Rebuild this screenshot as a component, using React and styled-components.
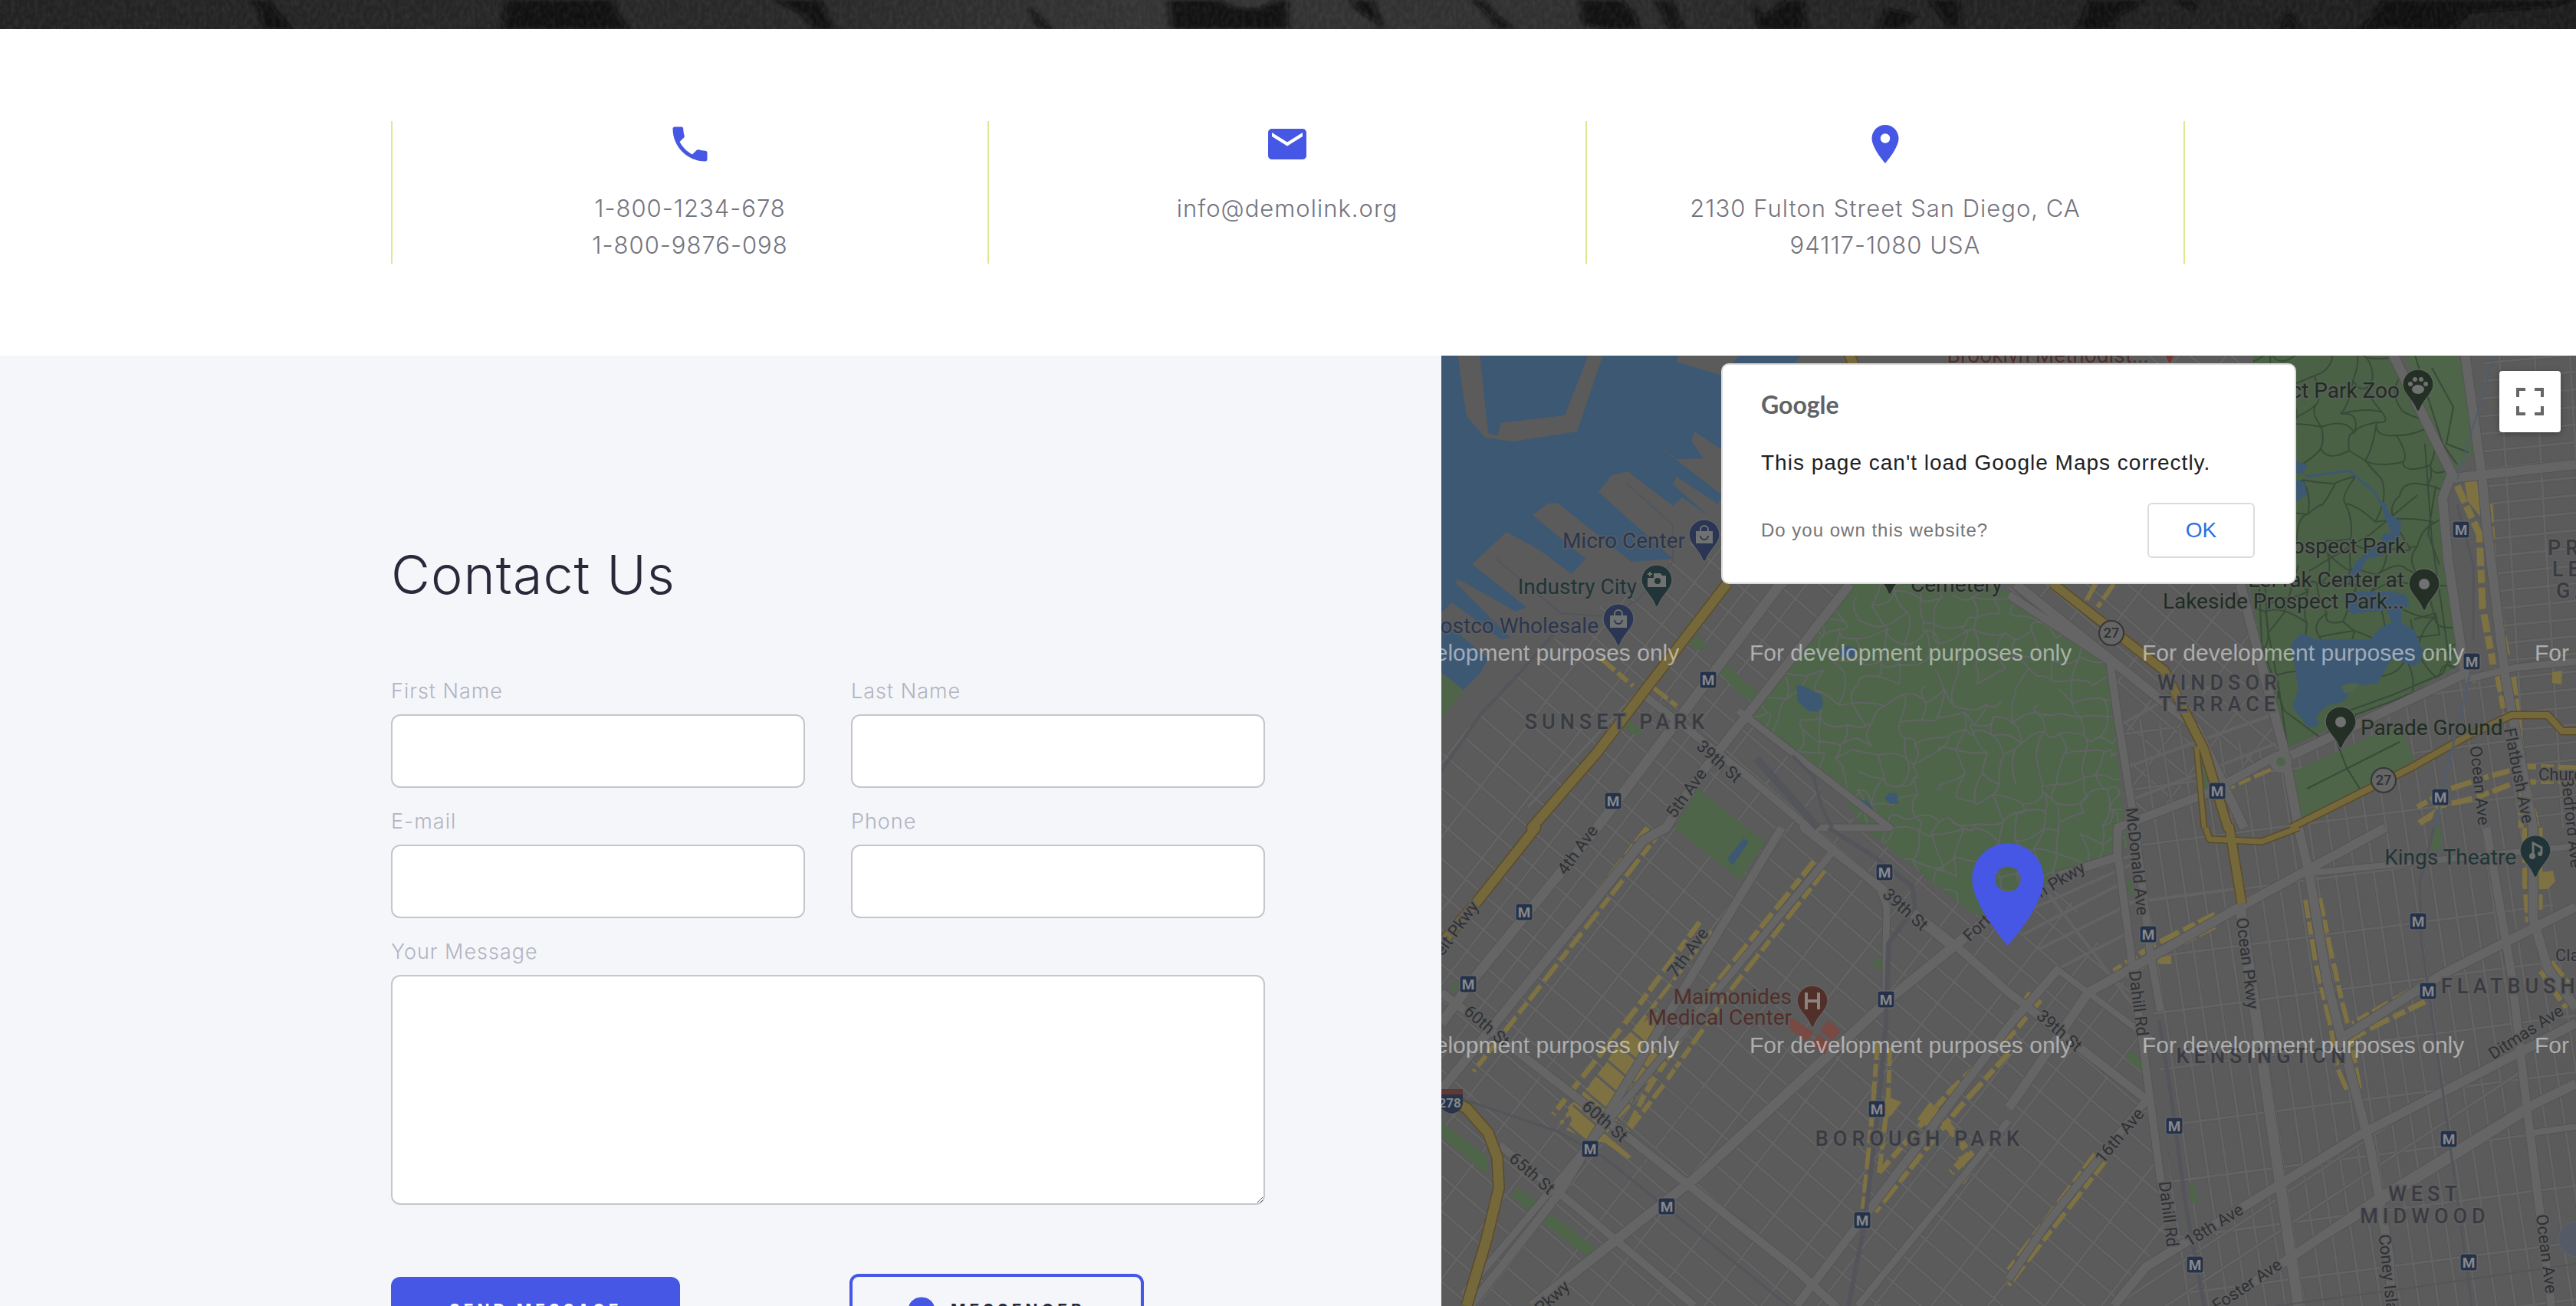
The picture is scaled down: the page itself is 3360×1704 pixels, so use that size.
import React from "react";
import styled, { createGlobalStyle } from "styled-components";
import { MdPhone, MdEmail, MdPlace } from "react-icons/md";
import { FaFacebookMessenger } from "react-icons/fa";

const color = {
  accent: "#4757e5",
  ink: "#29293a",
  body: "#74747f",
  label: "#b2b3bf",
  line: "#dfe78f",
  field: "#c4c6cb",
  panel: "#f5f6fa",
};

const GlobalStyle = createGlobalStyle`
  *, *::before, *::after { box-sizing: border-box; }
  body {
    margin: 0;
    background: #fff;
    font-family: Inter, "Liberation Sans", sans-serif;
    font-weight: 300;
  }
`;

const Page = styled.div`
  display: flex;
  flex-direction: column;
  height: 100vh;
  overflow: hidden;
`;

const Banner = styled.header`
  flex: none;
  height: 38px;
  background: #262626;
  svg { display: block; width: 100%; height: 100%; }
`;

const Info = styled.section`
  flex: none;
  padding: 120px 24px;
`;

const InfoGrid = styled.div`
  display: grid;
  grid-template-columns: repeat(3, 1fr);
  max-width: 2340px;
  margin: 0 auto;
`;

const InfoItem = styled.address`
  display: flex;
  flex-direction: column;
  align-items: center;
  min-height: 186px;
  border-right: 2px solid ${color.line};
  font-style: normal;
  text-align: center;
  &:first-child { border-left: 2px solid ${color.line}; }
  svg { width: 60px; height: 60px; margin-bottom: 30px; fill: ${color.accent}; }
`;

const InfoLink = styled.a`
  color: ${color.body};
  font-size: 31px;
  line-height: 48px;
  letter-spacing: 1px;
  text-decoration: none;
`;

const Contact = styled.section`
  flex: 1;
  min-height: 0;
  display: grid;
  grid-template-columns: 47fr 37fr;
`;

const FormPanel = styled.div`
  min-height: 0;
  background: ${color.panel};
  padding: 244px 230px 0 max(24px, calc((100vw - 2340px) / 2));
`;

const Title = styled.h1`
  margin: 0 0 90px;
  color: ${color.ink};
  font-size: 70px;
  font-weight: 300;
  line-height: 84px;
  letter-spacing: 1px;
`;

const Form = styled.form`
  display: grid;
  grid-template-columns: 1fr 1fr;
  gap: 24px 60px;
`;

const Field = styled.div`
  display: flex;
  flex-direction: column;
  gap: 10px;
  grid-column: ${(p) => (p.$wide ? "1 / -1" : "auto")};
`;

const Label = styled.label`
  color: ${color.label};
  font-size: 27px;
  line-height: 40px;
  letter-spacing: 1px;
`;

const Input = styled.input`
  height: 96px;
  padding: 0 28px;
  border: 2px solid ${color.field};
  border-radius: 12px;
  background: #fff;
  font: inherit;
  font-size: 28px;
`;

const TextArea = styled.textarea`
  display: block;
  height: 300px;
  padding: 24px 28px;
  border: 2px solid ${color.field};
  border-radius: 12px;
  background: #fff;
  font: inherit;
  font-size: 28px;
  resize: vertical;
`;

const Actions = styled.div`
  grid-column: 1 / -1;
  display: grid;
  grid-template-columns: 1fr 1fr;
  column-gap: 56px;
  align-items: center;
  justify-items: start;
  margin-top: 66px;
`;

const Button = styled.button`
  display: inline-flex;
  align-items: center;
  gap: 20px;
  height: ${(p) => (p.$outline ? 96 : 88)}px;
  padding: 0 ${(p) => (p.$outline ? 72 : 76)}px;
  border: ${(p) => (p.$outline ? `4px solid ${color.accent}` : "0")};
  border-radius: 12px;
  background: ${(p) => (p.$outline ? "transparent" : color.accent)};
  color: ${(p) => (p.$outline ? color.ink : "#fff")};
  font: 700 21px/24px Inter, "Liberation Sans", sans-serif;
  letter-spacing: 5px;
  text-transform: uppercase;
  svg { width: 36px; height: 36px; fill: ${color.accent}; }
`;

const MapPanel = styled.div`
  position: relative;
  min-height: 0;
  overflow: hidden;
  background: #5b5b5b;
`;

const MapSvg = styled.svg`
  position: absolute;
  inset: 0;
  width: 100%;
  height: 100%;
  font-family: Roboto, "Liberation Sans", sans-serif;
  font-weight: 400;
`;

const Dialog = styled.div`
  position: absolute;
  top: 10px;
  left: 50%;
  width: 750px;
  margin-left: -375px;
  padding: 32px 52px 32px 50px;
  border: 2px solid #dadada;
  border-radius: 10px;
  background: #fff;
  font-family: "Liberation Sans", Arial, sans-serif;
  font-weight: 400;
`;

const Brand = styled.div`
  color: #5f6368;
  font: 700 32px/40px Lato, "Liberation Sans", sans-serif;
`;

const Message = styled.p`
  margin: 38px 0 34px;
  color: #202124;
  font-size: 28px;
  line-height: 36px;
  letter-spacing: 1px;
`;

const DialogRow = styled.div`
  display: flex;
  align-items: center;
  justify-content: space-between;
`;

const OwnerLink = styled.a`
  color: #757575;
  font-size: 24px;
  letter-spacing: 1px;
  text-decoration: none;
`;

const OkButton = styled.button`
  width: 140px;
  height: 72px;
  border: 2px solid #dadce0;
  border-radius: 6px;
  background: #fff;
  color: #2a6fe0;
  font: 400 28px/36px "Liberation Sans", Arial, sans-serif;
`;

const FullscreenButton = styled.button`
  position: absolute;
  top: 20px;
  right: 20px;
  display: grid;
  place-items: center;
  width: 80px;
  height: 80px;
  padding: 0;
  border: 0;
  border-radius: 4px;
  background: #fff;
  box-shadow: 0 2px 8px rgba(0, 0, 0, 0.3);
`;

/* ---------- map geometry ---------- */

// The map is plotted on four survey tiles, each 1568 units square.
const TILES = {
  nw: [0, -4, 0.47194, 0.39541],
  ne: [740, -4, 0.47194, 0.39541],
  sw: [0, 616, 0.47194, 0.39796],
  se: [740, 616, 0.47194, 0.39796],
};

const at = (t, x, y) => {
  const [ox, oy, sx, sy] = TILES[t];
  return [Math.round(ox + x * sx), Math.round(oy + y * sy)];
};

// "nw 10,20 30,40 ne 5,6" -> list of map points, switching tile on a tile name
const points = (src) => {
  let tile = "nw";
  const out = [];
  src.split(" ").forEach((tok) => {
    if (TILES[tok]) tile = tok;
    else {
      const [x, y] = tok.split(",").map(Number);
      out.push(at(tile, x, y).join(","));
    }
  });
  return out.join(" ");
};

const c = {
  land: "#5b5b5b",
  street: "#656565",
  minor: "#636363",
  edge: "#545454",
  minorEdge: "#575757",
  water: "#3d5873",
  park: "#4e6549",
  path: "#616465",
  dark: "#3a4a39",
  hwy: "#75683a",
  hwyEdge: "#5a4b2b",
  shop: "#7e7243",
  rail: "#54555b",
};

const WATER = [
  "nw 0,0 1000,0 960,60 790,60 775,320 700,260 690,290 725,350 650,352 570,280 775,470 765,500 650,410 640,435 735,535 665,478 640,505 515,392 470,405 435,460 640,680 525,690 320,495 295,497 252,537 398,680 360,732 270,650 180,593 85,697 235,840 205,855 45,745 40,760 190,940 165,945 30,825 0,860",
  "nw 0,880 130,1010 105,1060 62,1112 0,1055",
  "nw 980,1098 1000,1100 1050,1130 1055,1165 1040,1187 1010,1180 985,1150",
  "nw 1148,1475 1175,1480 1195,1505 1180,1512 1150,1495",
  "nw 1225,1470 1240,1452 1258,1455 1262,1490 1240,1490",
  "nw 1100,985 1120,965 1148,975 1140,1005 1105,1005",
  "ne 795,360 825,370 815,400 795,400",
  "ne 795,420 820,430 825,470 795,490",
  "ne 1030,490 1045,500 1050,530 1085,560 1080,610 1035,670 990,680 965,745 930,760 960,690 1030,620 1035,600 1060,595 1040,550",
  "ne 925,810 960,790 1060,790 1095,800 1110,830 1085,850 1085,890 1120,915 1145,980 1140,1020 1120,1035 1060,1010 1020,1090 960,1100 925,1150 880,1165 850,1200 858,1230 830,1238 785,1170 800,1110 790,1030 780,960 810,925 850,945 1000,945 1025,910 1060,890 1045,850 950,862 930,840",
  "sw 790,100 835,35 850,45 805,122",
];

const PIERS = [
  "nw 45,0 60,130 70,210 120,280 200,293 375,260 450,0 410,0 342,208 165,232 155,275 130,265 105,0",
  "nw 655,0 650,30 775,75 830,0",
];

const CEMETERY =
  "nw 1130,755 990,985 890,1140 850,1210 1100,1440 sw 1165,0 1500,310 se 130,165 330,60 ne 320,1568 275,1020 150,920 0,790 nw 1450,755";
const PROSPECT =
  "ne 675,0 1050,0 1210,380 1235,405 1195,480 1215,700 1250,1030 1130,1110 760,1310 745,1230 670,800";

const PARKS = [
  "ne 1090,0 1255,0 1285,330 1240,390 1160,200",
  "ne 770,1390 1080,1225 1125,1350 805,1540",
  "nw 785,1030 890,1135 860,1150 840,1140 770,1060",
  "nw 680,955 710,935 735,965 715,985",
  "nw 510,1205 555,1250 545,1270 500,1235",
  "nw 0,1060 60,1112 100,1060 0,1210",
  "nw 710,1440 900,1620 sw 900,40 825,172 645,0",
  "sw 0,965 130,1080 130,1140 0,1010",
  "sw 210,1175 440,1395 415,1420 195,1210",
  "sw 20,540 35,505 50,515 30,545",
  "sw 1190,450 1215,420 1222,475",
  "ne 525,1340 570,1450 540,1480",
  "se 1175,0 1195,0 1195,70 1165,70",
  "se 325,740 345,735 380,780 378,810 330,765",
  "se 497,1165 512,1165 523,1232 505,1232",
  "se 323,165 345,170 348,218 335,218",
];

const MINOR = [
  "ne 310,1230 500,1100",
  "ne 320,1370 720,1200",
  "ne 330,1480 740,1290",
  "se 250,130 350,85",
  "se 40,350 330,170",
  "se 80,400 350,240",
  "se 140,460 340,340",
  "se 40,280 340,120",
  "se 100,200 350,590",
  "se 0,250 130,150",
  "se 330,245 620,200",
];

const MAJOR = [
  ["nw 1568,60 nw 930,775 430,1568 sw 100,480 0,640", 13],
  ["nw 1130,765 710,1400 nw 620,1568 sw 560,40 0,860", 12],
  ["sw 940,0 330,1190 80,1568", 11],
  ["sw 1080,80 300,1190 sw 60,1530", 9],
  ["nw 1000,1568 sw 1420,385 1568,540 se 380,890", 11],
  ["nw 560,1130 850,1400 sw 1200,185 1420,400", 10],
  ["nw 820,1180 1240,1568 sw 1000,0 1210,190 1232,260 1228,400 1230,600", 9],
  ["ne 1060,0 1225,400 1200,480 1215,680 1260,1060 780,1330", 12],
  ["ne 1260,0 1310,420 1320,560 1370,1060 1400,1250 1450,1568 se 1450,300 1490,460 1568,590", 12],
  ["ne 1225,415 1568,370", 12],
  ["ne 1568,1020 1400,1040 1260,1080", 9],
  ["ne 0,800 280,1020 300,1200 350,1568 se 390,400 420,600", 10],
  ["ne 640,765 760,1310 800,1568 se 830,150 880,500 920,690 1000,1050 1050,1400 1060,1568", 12],
  ["ne 740,1330 560,1450 300,1568 se 300,95 130,160", 11],
  ["se 300,80 420,1150 440,1300", 10],
  ["se 640,260 740,1080 800,1568", 14],
  ["se 0,920 220,540 640,260 1040,0", 12],
  ["sw 0,540 500,1000 980,1450 1090,1568", 11],
  ["sw 160,1040 380,1250 700,1568", 10],
  ["sw 1568,240 1240,560 700,1150 250,1568", 13],
  ["se 290,1568 380,1440 980,1000 1568,640", 12],
  ["se 640,1520 1040,1200 1430,920 1568,840", 12],
  ["se 800,1390 940,1290 1200,1100 1430,930", 10],
  ["se 920,690 1200,480 1568,260", 12],
  ["se 1320,0 1390,480 1430,900 1500,1568", 11],
  ["se 810,150 1568,60", 8],
  ["se 390,880 110,1290 0,1480", 10],
  ["sw 980,1568 1568,650 se 140,460", 11],
  ["sw 1150,1568 1568,960", 9],
  ["se 1450,1000 1568,980", 8],
  ["se 130,460 400,700", 8],
  ["ne 20,765 520,1240 650,1568", 12],
];

const HIGHWAYS = [
  ["nw 790,760 430,1320 250,1568 sw 260,0 100,240 0,380", 12],
  ["sw 0,880 70,920 130,1000 155,1080 158,1180 125,1350 70,1568", 13],
  ["ne 120,760 430,1050 540,1310 605,1568 se 610,0 645,250", 11],
  ["ne 780,1568 1110,1370 1260,1270 1390,1195 1490,1195 1530,1250 1568,1250", 8],
  ["se 545,0 555,38 700,45 800,0", 7],
  ["ne 520,1300 540,1568", 6],
  ["nw 1125,0 1140,40", 12],
];

const SHOPS = [
  ["sw 570,0 55,790", 7],
  ["sw 615,0 90,800", 6],
  ["sw 1030,110 740,540 560,880 510,1000", 7],
  ["sw 1060,140 800,530 610,850 520,990", 6],
  ["sw 715,310 540,590 310,940", 7],
  ["sw 745,340 590,580 330,970", 5],
  ["sw 1205,700 1190,940 1165,1250", 6],
  ["sw 1240,720 1235,880 1210,1130", 6],
  ["sw 1568,680 1410,860 1210,1130", 7],
  ["sw 1568,740 1430,920 1200,1260", 7],
  ["sw 1390,960 1460,1070 1410,1130", 10],
  ["sw 1495,1070 1435,1170", 6],
  ["se 60,540 0,640", 6],
  ["se 90,565 0,690", 6],
  ["se 240,1070 0,1450", 7],
  ["se 270,1090 0,1500", 6],
  ["se 570,285 400,385 290,470", 7],
  ["se 570,325 430,410 320,490", 6],
  ["se 820,235 850,450 890,650 910,790 935,860", 6],
  ["se 860,230 885,380 920,560 940,660 970,860", 6],
  ["se 1210,465 1100,540 950,640", 6],
  ["se 1150,570 1010,650 950,690", 7],
  ["se 1425,0 1425,180 1435,310", 6],
  ["se 1470,0 1470,270", 5],
  ["se 1470,470 1540,590", 7],
  ["se 1500,440 1568,540", 6],
  ["ne 1240,440 1300,600 1310,840 1340,1030", 9],
  ["ne 1330,500 1345,780 1380,1010", 7],
  ["ne 1350,1050 1280,1080", 9],
  ["ne 1350,1060 1370,1200", 7],
  ["ne 1395,1070 1420,1350 1460,1568", 8],
  ["ne 1568,1370 1430,1365 1320,1400 1220,1440 1130,1500", 7],
  ["ne 1568,1410 1400,1420 1290,1470 1180,1500", 7],
  ["ne 1420,1410 1415,1568", 7],
  ["ne 240,765 210,830", 6],
  ["ne 290,765 245,840", 6],
  ["ne 725,1375 605,1440", 5],
  ["nw 440,1010 530,1100", 6],
  ["nw 585,1105 650,1165", 6],
];

const SHOP_AREAS = [
  "ne 1258,420 1298,418 1305,545 1270,490",
  "ne 1503,1055 1530,1050 1528,1095 1503,1090",
  "ne 1130,1545 1180,1505 1170,1540 1140,1560",
  "sw 555,640 600,600 580,690 610,760 575,835 545,850 520,920 490,955 460,1000 530,1075 515,1085 450,1030 420,1030 345,990 360,960 350,915 385,880 440,800 480,720 530,660",
  "sw 1230,880 1272,900 1245,940 1225,960",
  "sw 1350,900 1380,930 1345,985 1315,955",
  "sw 1425,1080 1455,1070 1445,1110",
  "se 1470,145 1505,140 1510,175 1490,200 1468,200",
  "se 410,425 450,420 450,447 415,447",
];

const RAILS = [
  ["sw 60,890 320,995 450,1080 960,1568", 3],
  ["sw 1070,0 1190,90 1300,190 1310,260 1235,380 1228,640 1205,940 1170,1300 1125,1568", 6],
  ["se 1175,0 1135,180 1140,360 1200,860 1230,1120 1280,1568", 3],
  ["se 415,630 450,880 490,1240 540,1568", 5],
  ["nw 870,1340 930,1420 1040,1568", 10],
  ["nw 970,1330 1030,1400 1050,1500 1080,1568", 4],
  ["nw 150,680 330,860 450,870 540,820 640,690 640,570 510,430", 2],
  ["nw 0,1380 110,1190 200,1080 310,930", 4],
  ["ne 1240,500 1285,700 1285,950", 3],
  ["se 740,1568 1100,1510 1568,1430", 2],
];

const LAKE_PATHS = [
  "ne 700,480 715,900 745,1100 770,1290",
  "ne 690,700 700,960 760,1180 860,1270 960,1200",
  "ne 1120,0 1160,150 1200,300 1240,370",
  "ne 1170,50 1230,180 1210,300 1270,330",
  "ne 1150,300 1170,620 1200,860 1220,1040",
  "ne 1180,440 1160,600 1190,700",
  "ne 900,1200 1060,1130 1200,1060 1230,980",
  "ne 880,1230 1060,1150 1180,1090",
  "ne 800,700 760,860 720,920",
  "ne 830,720 1000,600 1130,470",
  "ne 880,1200 935,1370 970,1440",
  "ne 825,1440 1080,1285",
  "ne 1120,880 1180,860 1190,930 1120,940 1110,880",
];

const METRO = [
  "nw 737,1080", "nw 474,1480", "sw 229,276", "sw 74,512", "sw 412,1053", "sw 623,1241",
  "sw 1224,146", "sw 1229,562", "sw 1203,922", "sw 1163,1286", "ne 1250,584", "ne 1280,1019",
  "ne 576,1446", "ne 1193,1466", "se 385,349", "se 457,977", "se 515,1432", "se 1131,306",
  "se 1159,535", "se 1216,1020", "se 1271,1424",
];

const STREET_LABELS = [
  ["nw 768,1350", "39th St", 42],
  ["nw 678,1455", "5th Ave", -54],
  ["sw 378,72", "4th Ave", -54],
  ["sw 682,410", "7th Ave", -54],
  ["sw 1283,268", "39th St", 42],
  ["sw 124,652", "60th St", 41],
  ["sw 452,963", "60th St", 41],
  ["sw 249,1134", "65th St", 41],
  ["sw 1482,328", "Fort", -43],
  ["se 144,172", "n Pkwy", -31],
  ["se 140,665", "39th St", 41],
  ["se 308,1010", "16th Ave", -50],
  ["se 568,1305", "18th Ave", -32],
  ["se 658,1500", "Foster Ave", -34],
  ["se 1431,672", "Ditmas Ave", -33],
  ["se 353,110", "McDonald Ave", 84],
  ["se 358,575", "Dahill Rd", 83],
  ["se 441,1266", "Dahill Rd", 83],
  ["se 658,446", "Ocean Pkwy", 83],
  ["ne 1300,1430", "Ocean Ave", 84],
  ["ne 1410,1395", "Flatbush Ave", 79],
  ["se 1486,1396", "Ocean Ave", 83],
  ["se 1052,1490", "Coney Island", 84],
  ["ne 1556,1550", "Bedford Ave", 84],
  ["sw 308,1540", "Pkwy", -42],
  ["sw 34,345", "Belt Pkwy", -54],
];

const AREA_LABELS = [
  ["nw 486,1242", "SUNSET PARK", "middle"],
  ["ne 583,1112", "WINDSOR", "middle"],
  ["ne 583,1183", "TERRACE", "middle"],
  ["sw 1322,1042", "BOROUGH PARK", "middle"],
  ["se 703,772", "KENSINGTON", "middle"],
  ["se 1195,544", "FLATBUSH", "start"],
  ["se 1150,1224", "WEST", "middle"],
  ["se 1150,1296", "MIDWOOD", "middle"],
  ["ne 1490,667", "PROSPECT", "start"],
  ["ne 1503,738", "LEFFERTS", "start"],
  ["ne 1513,809", "GARDENS", "start"],
];

const PLACES = [
  ["nw 674,645", "Micro Center", "end", "#2b3650"],
  ["nw 541,796", "Industry City", "end", "#1f3537"],
  ["nw 435,925", "Costco Wholesale", "end", "#2b3650"],
  ["nw 1296,788", "Cemetery", "start", "#1f2d22"],
  ["ne 1080,150", "Prospect Park Zoo", "end", "#1f2d22"],
  ["ne 1098,662", "Prospect Park", "end", "#1f2d22"],
  ["ne 1094,773", "LeFrak Center at", "end", "#1f2d22"],
  ["ne 1094,845", "Lakeside Prospect Park...", "end", "#1f2d22"],
  ["ne 972,1263", "Parade Ground", "start", "#1f2d22"],
  ["ne 388,32", "Brooklyn Methodist...", "end", "#512e2a"],
  ["se 1402,120", "Kings Theatre", "end", "#1f3537"],
  ["sw 968,577", "Maimonides", "end", "#512e2a"],
  ["sw 968,646", "Medical Center", "end", "#512e2a"],
];

const MARKERS = [
  ["nw 727,603", "bag", "#2b3654"],
  ["nw 596,752", "camera", "#213437"],
  ["nw 489,880", "bag", "#2b3654"],
  ["nw 1240,710", "dot", "#243025"],
  ["ne 1131,105", "paw", "#243025"],
  ["ne 1149,763", "dot", "#243025"],
  ["ne 917,1218", "dot", "#243025"],
  ["ne 445,-50", "dot", "#6f372f"],
  ["se 1456,76", "note", "#213437"],
  ["sw 1025,568", "hospital", "#51302a"],
];

// Deterministic jitter for the footpath mesh
const jitter = (i, j, k) => {
  const v = Math.sin(i * 127.1 + j * 311.7 + k * 74.7) * 43758.5453;
  return v - Math.floor(v) - 0.5;
};

const footpaths = (x0, y0, x1, y1, step) => {
  const node = (i, j) => [
    x0 + i * step + jitter(i, j, 1) * step * 0.9,
    y0 + j * step + jitter(i, j, 2) * step * 0.9,
  ];
  let d = "";
  for (let i = 0; x0 + i * step < x1; i++) {
    for (let j = 0; y0 + j * step < y1; j++) {
      const a = node(i, j);
      [[i + 1, j], [i, j + 1]].forEach(([m, n], k) => {
        if (jitter(i, j, 5 + k) > 0.25) return;
        const b = node(m, n);
        const qx = (a[0] + b[0]) / 2 + jitter(i, j, 8 + k) * step;
        const qy = (a[1] + b[1]) / 2 + jitter(i, j, 11 + k) * step;
        d += `M${a[0].toFixed(0)} ${a[1].toFixed(0)}Q${qx.toFixed(0)} ${qy.toFixed(0)} ${b[0].toFixed(0)} ${b[1].toFixed(0)}`;
      });
    }
  }
  return d;
};

// Parallel streets: y = slope * x + offset
const rows = (slope, from, to, step) => {
  let d = "";
  for (let o = from; o < to; o += step) d += `M0 ${o}L1480 ${Math.round(o + slope * 1480)}`;
  return d;
};
// Parallel avenues: x = lean * y + offset
const cols = (lean, from, to, step) => {
  let d = "";
  for (let o = from; o < to; o += step) d += `M${o} 0L${Math.round(o + lean * 1240)} 1240`;
  return d;
};

const GRIDS = [
  {
    id: "west",
    shape: "nw 775,540 640,680 330,920 0,1330 sw 0,1568 1568,1568 se 300,1568 440,1320 390,880 350,560 130,165 sw 1500,310 1165,0 nw 850,1210 1130,765 775,740",
    d: rows(0.86, -1000, 1240, 46) + cols(-0.77, 40, 2100, 74),
  },
  {
    id: "windsor",
    shape: "nw 1568,760 ne 0,0 675,0 670,800 760,1310 330,1568 275,1020 0,790",
    d: rows(0.86, -1300, 400, 46) + cols(-0.77, 900, 1900, 62),
  },
  {
    id: "kensington",
    shape: "ne 320,1200 760,1320 1250,1050 1400,1060 1460,1568 se 1568,600 1568,1568 480,1568 400,600 350,80",
    d: cols(0.15, 640, 1500, 25) + rows(-0.13, 461, 1440, 74),
  },
  {
    id: "flatbush",
    shape: "ne 1320,0 1568,0 1568,1568 1460,1568 1380,1060 1290,400",
    d: rows(-0.1, 100, 900, 23) + cols(0.06, 1380, 1480, 46),
  },
  {
    id: "midwood",
    shape: "se 380,1440 760,1170 980,1000 1430,720 1430,920 1040,1200 640,1520 560,1568 300,1568",
    d: rows(-0.66, 1600, 2300, 44),
  },
];

const PinGlyph = ({ kind }) => {
  const f = "#6f7270";
  if (kind === "bag")
    return (
      <g fill="none" stroke={f} strokeWidth="2">
        <rect x="-10" y="-4" width="20" height="14" fill={f} />
        <path d="M-5 -4v-3a5 5 0 0 1 10 0v3" />
        <path d="M-5 1a5 5 0 0 0 10 0" stroke="#2b3654" />
      </g>
    );
  if (kind === "camera")
    return (
      <g fill={f}>
        <path d="M-4 -9h9l2 3h5v15h-24v-12h8z" />
        <circle cx="1" cy="1" r="4" fill="#213437" />
        <path d="M-12 -9h2v-2h2v2h2v2h-2v2h-2v-2h-2z" />
      </g>
    );
  if (kind === "paw")
    return (
      <g fill={f}>
        <ellipse cx="0" cy="6" rx="8" ry="6" />
        <circle cx="-10" cy="-1" r="3" />
        <circle cx="-4" cy="-7" r="3" />
        <circle cx="4" cy="-7" r="3" />
        <circle cx="10" cy="-1" r="3" />
      </g>
    );
  if (kind === "note")
    return (
      <g fill={f}>
        <circle cx="-4" cy="7" r="4" />
        <circle cx="6" cy="4" r="3" />
        <path d="M-3 7v-17l11 6v8" fill="none" stroke={f} strokeWidth="3" />
      </g>
    );
  if (kind === "hospital")
    return <path d="M-8 -11v22M8 -11v22M-8 0h16" stroke="#8a8380" strokeWidth="4" fill="none" />;
  return <circle r="7" fill={f} />;
};

const Marker = ({ where, kind, fill }) => {
  const [x, y] = points(where).split(",");
  return (
    <g transform={`translate(${x} ${y})`}>
      <path
        d="M0 -20C11 -20 20 -11 20 0C20 11 6 20 2 33Q0 36 -2 33C-6 20 -20 11 -20 0C-20 -11 -11 -20 0 -20Z"
        fill={fill}
        stroke="#6a6c6b"
        strokeWidth="1"
      />
      <PinGlyph kind={kind} />
    </g>
  );
};

const Route = ({ where }) => {
  const [x, y] = points(where).split(",").map(Number);
  return (
    <g>
      <circle cx={x} cy={y} r="16" fill="#656565" stroke="#35363a" strokeWidth="2" />
      <text x={x} y={y + 6} textAnchor="middle" fontSize="18" fontWeight="500" fill="#2e3034">27</text>
    </g>
  );
};

const halo = { stroke: "#5e5e5e", strokeWidth: 4, paintOrder: "stroke", strokeLinejoin: "round" };

function CityMap() {
  return (
    <MapSvg viewBox="0 0 1480 1240" preserveAspectRatio="xMidYMin slice" role="img" aria-label="Map of Brooklyn">
      <defs>
        {GRIDS.map((g) => (
          <clipPath key={g.id} id={`grid-${g.id}`}><polygon points={points(g.shape)} /></clipPath>
        ))}
        <clipPath id="cemetery"><polygon points={points(CEMETERY)} /></clipPath>
        <clipPath id="prospect"><polygon points={points(PROSPECT)} /></clipPath>
      </defs>
      <rect width="1480" height="1240" fill={c.land} />
      {GRIDS.map((g) => (
        <g key={g.id} clipPath={`url(#grid-${g.id})`} fill="none">
          <path d={g.d} stroke={c.minorEdge} strokeWidth="5" />
          <path d={g.d} stroke={c.minor} strokeWidth="3" />
        </g>
      ))}
      <polyline points={points("nw 240,1500 640,1000")} stroke={c.street} strokeWidth="3" fill="none" />
      {MINOR.map((l) => (
        <polyline key={l} points={points(l)} stroke={c.minor} strokeWidth="4" fill="none" />
      ))}

      <polygon points={points(WATER[0])} fill={c.water} />
      {PIERS.map((p) => <polygon key={p} points={points(p)} fill={c.land} />)}
      <circle cx="1480" cy="1153" r="23" fill="#555b66" stroke="#61656b" />
      <polygon points={points(CEMETERY)} fill={c.park} />
      <polygon points={points(PROSPECT)} fill="#4b6146" />
      {PARKS.map((p) => <polygon key={p} points={points(p)} fill={c.park} />)}
      <g fill="none" strokeWidth="2">
        <path clipPath="url(#cemetery)" d={footpaths(390, 290, 900, 760, 26)} stroke={c.path} />
        <path clipPath="url(#prospect)" d={footpaths(1050, 0, 1340, 420, 34)} stroke={c.dark} />
        {LAKE_PATHS.map((l) => <polyline key={l} points={points(l)} stroke={c.dark} />)}
      </g>
      {WATER.slice(1).map((p) => <polygon key={p} points={points(p)} fill={c.water} />)}
      <polyline points={points("ne 820,410 940,390 1010,460 1045,530")} stroke={c.water} strokeWidth="3" fill="none" />
      <polygon points={points("ne 920,1100 945,1090 970,1095 950,1120 930,1125")} fill={c.park} />

      {SHOP_AREAS.map((p) => <polygon key={p} points={points(p)} fill={c.shop} />)}
      {SHOPS.map(([l, w]) => (
        <polyline key={l} points={points(l)} stroke={c.shop} strokeWidth={w} strokeDasharray="24 5 17 6 28 7" fill="none" />
      ))}
      <g stroke={c.land} strokeWidth="3">
        {[0, 1, 2, 3, 4, 5, 6].map((i) => {
          const [x, y] = at("sw", 500 - i * 27, 640 + i * 54);
          return <line key={i} x1={x} y1={y} x2={x + 110} y2={y + 94} />;
        })}
      </g>

      <g fill="none" strokeLinejoin="round">
        {MAJOR.map(([l, w]) => <polyline key={l} points={points(l)} stroke={c.edge} strokeWidth={w + 2} />)}
        {MAJOR.map(([l, w]) => <polyline key={l} points={points(l)} stroke={c.street} strokeWidth={w} />)}
        {RAILS.map(([l, w]) => <polyline key={l} points={points(l)} stroke={c.rail} strokeWidth={w} />)}
        {HIGHWAYS.map(([l, w]) => <polyline key={l} points={points(l)} stroke={c.hwyEdge} strokeWidth={w + 3} />)}
        {HIGHWAYS.map(([l, w]) => <polyline key={l} points={points(l)} stroke={c.hwy} strokeWidth={w} />)}
      </g>
      <polyline points={points("ne 1345,0 1240,420")} stroke="#505d6d" strokeWidth="2" fill="none" />
      <polyline points={points("ne 1275,1060 1200,1440 1180,1568")} stroke="#505d6d" strokeWidth="3" fill="none" />
      <circle cx={at("ne", 752, 1350)[0]} cy={at("ne", 752, 1350)[1]} r="10" fill={c.park} stroke={c.street} strokeWidth="8" />
      <polygon points={points("sw 965,620 1030,670 1010,700 965,660")} fill="#784a43" />
      <polygon points={points("sw 1070,630 1105,665 1080,698 1047,665")} fill="#784a43" />
      <polygon points={points("sw 1040,675 1075,705 1060,745 1025,710")} fill="#784a43" />

      {METRO.map((m) => {
        const [x, y] = points(m).split(",").map(Number);
        return (
          <g key={m}>
            <rect x={x - 11} y={y - 11} width="22" height="22" rx="3" fill="#263248" stroke="#6b6d70" />
            <text x={x} y={y + 7} textAnchor="middle" fontSize="19" fontWeight="700" fill="#85888d">M</text>
          </g>
        );
      })}
      <Route where="ne 284,925" />
      <Route where="ne 1036,1412" />
      <g>
        <path d="M0 958h28v16q0 12 -14 15q-14 -3 -19 -15z" fill="#29344a" />
        <rect x="-4" y="957" width="32" height="7" fill="#5f3a35" />
        <text x="11" y="981" textAnchor="middle" fontSize="17" fontWeight="700" fill="#85888d">278</text>
      </g>

      {STREET_LABELS.map(([w, text, angle]) => {
        const [x, y] = points(w).split(",");
        return (
          <text key={w} transform={`translate(${x} ${y}) rotate(${angle})`} y="7" textAnchor="middle" fontSize="22" fill="#2f3135" {...halo}>
            {text}
          </text>
        );
      })}
      <text x="1431" y="554" fontSize="22" fill="#2f3135" {...halo}>Church Ave</text>
      <text x="1453" y="790" fontSize="22" fill="#2f3135" {...halo}>Clarendon Rd</text>
      {AREA_LABELS.map(([w, text, anchor]) => {
        const [x, y] = points(w).split(",");
        return (
          <text key={w} x={x} y={y} textAnchor={anchor} fontSize="27" fontWeight="500" letterSpacing="6" fill="#3a3b42" {...halo}>
            {text}
          </text>
        );
      })}
      {PLACES.map(([w, text, anchor, fill]) => {
        const [x, y] = points(w).split(",");
        return (
          <text key={w} x={x} y={y} textAnchor={anchor} fontSize="28" fill={fill} {...halo} strokeOpacity="0.7">
            {text}
          </text>
        );
      })}
      {MARKERS.map(([w, kind, fill]) => <Marker key={w} where={w} kind={kind} fill={fill} />)}

      <g fontFamily='"Liberation Sans", Arial, sans-serif' fontSize="30" fill="#fff" fillOpacity="0.5">
        {[398, 910].map((y) =>
          [-110, 402, 914, 1426].map((x) => (
            <text key={`${x}-${y}`} x={x} y={y}>For development purposes only</text>
          ))
        )}
      </g>

      <path
        transform="translate(659 623) scale(6.68)"
        fill={color.accent}
        d="M12 2C8.13 2 5 5.13 5 9c0 5.25 7 13 7 13s7-7.75 7-13c0-3.87-3.13-7-7-7zm0 9.5c-1.38 0-2.5-1.12-2.5-2.5s1.12-2.5 2.5-2.5 2.5 1.12 2.5 2.5-1.12 2.5-2.5 2.5z"
      />
    </MapSvg>
  );
}

/* ---------- banner texture ---------- */

const SHADOWS = [
  "330,0 350,0 365,20 382,38 345,38 338,12",
  "660,0 800,0 805,18 820,38 655,38",
  "1010,0 1070,0 1078,18 1088,38 1064,38 1045,18",
  "1340,8 1352,18 1372,38 1356,38",
  "1524,0 1590,0 1610,10 1640,12 1664,0 1680,0 1680,38 1528,38",
  "1760,0 1790,0 1805,38 1795,30 1772,14",
  "1920,0 1935,0 1950,18 1975,38 1955,38 1935,14",
  "2062,0 2116,0 2132,18 2140,38 2100,38 2064,32",
  "2160,0 2180,0 2196,38 2178,38",
  "2285,0 2300,22 2330,0 2352,0 2356,38 2295,38",
  "2460,10 2500,20 2480,38 2450,38",
  "2515,0 2556,0 2556,38 2545,38",
  "2725,0 2800,0 2765,20 2755,38 2710,38",
  "2840,0 2865,0 2860,16",
  "2985,14 3000,38 2975,38",
  "3110,0 3360,0 3320,10 3220,16 3200,38 3080,38",
];

function BannerTexture() {
  return (
    <svg viewBox="0 0 3360 38" preserveAspectRatio="none" aria-hidden="true">
      <defs>
        <linearGradient id="tone">
          <stop offset="0" stopColor="#222" />
          <stop offset="0.3" stopColor="#282828" />
          <stop offset="0.44" stopColor="#333" />
          <stop offset="0.6" stopColor="#303030" />
          <stop offset="0.7" stopColor="#252525" />
          <stop offset="1" stopColor="#1c1c1c" />
        </linearGradient>
        <filter id="grain" x="0" y="0" width="100%" height="100%">
          <feTurbulence type="fractalNoise" baseFrequency="0.2 0.12" numOctaves="3" seed="4" />
          <feColorMatrix values="0 0 0 0 1  0 0 0 0 1  0 0 0 0 1  0.5 0 0 0 -0.16" />
        </filter>
        <filter id="soft" x="-5%" y="-50%" width="110%" height="200%"><feGaussianBlur stdDeviation="4 2" /></filter>
      </defs>
      <rect width="3360" height="38" fill="url(#tone)" />
      <g fill="#080808" fillOpacity="0.9" filter="url(#soft)">
        {SHADOWS.map((s) => <polygon key={s} points={s} />)}
      </g>
      <rect width="3360" height="38" filter="url(#grain)" opacity="0.22" />
    </svg>
  );
}

export default function App() {
  return (
    <Page>
      <GlobalStyle />
      <Banner><BannerTexture /></Banner>

      <Info>
        <InfoGrid>
          <InfoItem>
            <MdPhone />
            <InfoLink href="tel:1-800-1234-678">1-800-1234-678</InfoLink>
            <InfoLink href="tel:1-800-9876-098">1-800-9876-098</InfoLink>
          </InfoItem>
          <InfoItem>
            <MdEmail />
            <InfoLink href="mailto:info@demolink.org">info@demolink.org</InfoLink>
          </InfoItem>
          <InfoItem>
            <MdPlace />
            <InfoLink href="#map">2130 Fulton Street San Diego, CA<br />94117-1080 USA</InfoLink>
          </InfoItem>
        </InfoGrid>
      </Info>

      <Contact>
        <FormPanel>
          <Title>Contact Us</Title>
          <Form onSubmit={(e) => e.preventDefault()}>
            <Field>
              <Label htmlFor="first-name">First Name</Label>
              <Input id="first-name" type="text" />
            </Field>
            <Field>
              <Label htmlFor="last-name">Last Name</Label>
              <Input id="last-name" type="text" />
            </Field>
            <Field>
              <Label htmlFor="email">E-mail</Label>
              <Input id="email" type="email" />
            </Field>
            <Field>
              <Label htmlFor="phone">Phone</Label>
              <Input id="phone" type="tel" />
            </Field>
            <Field $wide>
              <Label htmlFor="message">Your Message</Label>
              <TextArea id="message" />
            </Field>
            <Actions>
              <Button type="submit">Send message</Button>
              <Button type="button" $outline><FaFacebookMessenger />Messenger</Button>
            </Actions>
          </Form>
        </FormPanel>

        <MapPanel id="map">
          <CityMap />
          <Dialog role="dialog" aria-label="Google Maps error">
            <Brand>Google</Brand>
            <Message>This page can't load Google Maps correctly.</Message>
            <DialogRow>
              <OwnerLink href="#owner">Do you own this website?</OwnerLink>
              <OkButton type="button">OK</OkButton>
            </DialogRow>
          </Dialog>
          <FullscreenButton type="button" aria-label="Toggle fullscreen view">
            <svg width="36" height="36" viewBox="0 0 36 36" fill="none" stroke="#666" strokeWidth="4">
              <path d="M2 12V2H12M24 2h10V12M34 24v10H24M12 34H2V24" />
            </svg>
          </FullscreenButton>
        </MapPanel>
      </Contact>
    </Page>
  );
}
